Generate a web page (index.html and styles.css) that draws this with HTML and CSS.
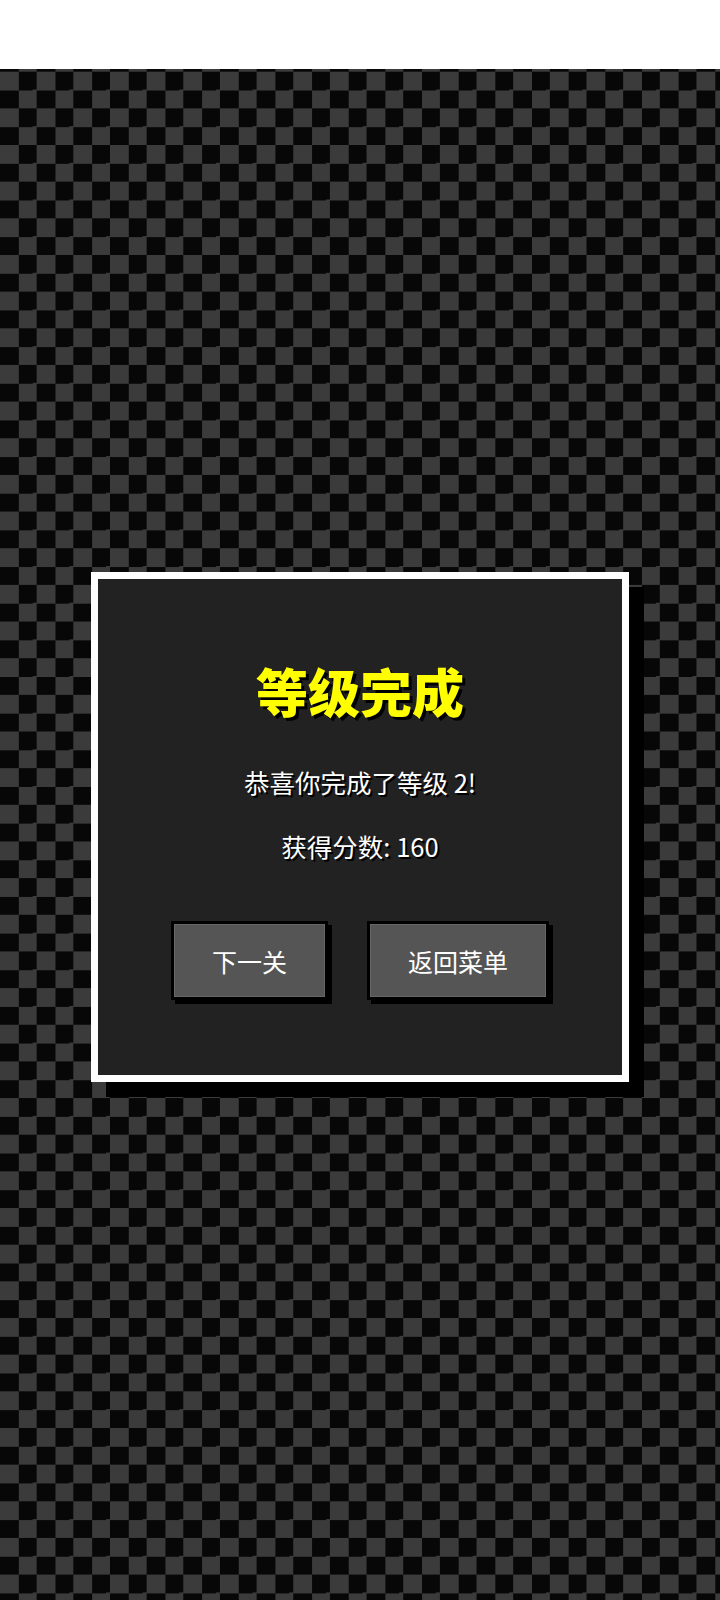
FILE: index.html
```html
<!DOCTYPE html>
<html lang="zh-CN">
<head>
<meta charset="utf-8">
<title>等级完成</title>
<link rel="stylesheet" href="styles.css">
</head>
<body>
<div class="topbar"></div>
<main class="stage">
  <section class="modal">
    <h1 class="title">等级完成</h1>
    <p class="msg">恭喜你完成了等级 2!</p>
    <p class="msg score">获得分数: 160</p>
    <div class="actions">
      <button class="btn">下一关</button>
      <button class="btn">返回菜单</button>
    </div>
  </section>
</main>
</body>
</html>
```
FILE: styles.css
```css
html, body {
  margin: 0;
  padding: 0;
}
body {
  width: 720px;
  height: 1600px;
  background: #ffffff;
  font-family: "Noto Sans CJK SC", "Noto Sans", sans-serif;
  overflow: hidden;
}
.topbar {
  height: 69px;
  background: #ffffff;
}
.stage {
  height: 1531px;
  box-sizing: border-box;
  padding-bottom: 15px;
  display: flex;
  align-items: center;
  justify-content: center;
  background-color: #070707;
  background-image: conic-gradient(transparent 25%, #3b3b3b 0 50%, transparent 0 75%, #3b3b3b 0);
  background-size: 36.667px 36.667px;
  background-position: 0 2.7px;
}
.modal {
  width: 538px;
  height: 510px;
  box-sizing: border-box;
  border: 7px solid #ffffff;
  background: #222222;
  box-shadow: 15px 15px 0 #000000;
  display: flex;
  flex-direction: column;
  align-items: center;
}
.title {
  margin: 81px 0 0;
  font-size: 52px;
  line-height: 62px;
  font-weight: 900;
  color: #ffff00;
  text-shadow: 3px 3px 0 #000000;
}
.msg {
  margin: 45px 0 0;
  font-size: 25.5px;
  line-height: 30px;
  color: #ffffff;
  text-shadow: 2px 2px 0 #000000;
}
.score {
  margin-top: 34px;
}
.actions {
  margin-top: 60px;
  display: flex;
  gap: 39px;
}
.btn {
  height: 79px;
  box-sizing: border-box;
  padding: 0 38px;
  border: 3px solid #000000;
  background: #555555;
  color: #ffffff;
  font-family: "Noto Sans CJK SC", "Noto Sans", sans-serif;
  font-size: 25px;
  line-height: 30px;
  box-shadow: 4px 4px 0 #000000, inset 0 0 0 1px #666666;
  cursor: pointer;
}
```
